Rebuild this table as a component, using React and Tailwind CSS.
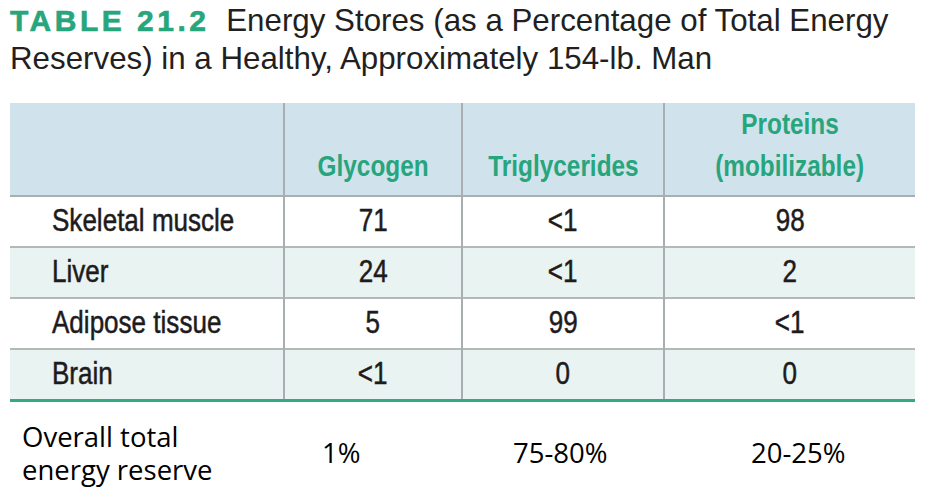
import React from "react";

const rows = [
  { label: "Skeletal muscle", g: "71", t: "<1", p: "98", bg: "bg-white" },
  { label: "Liver", g: "24", t: "<1", p: "2", bg: "bg-[#e9f3f1]" },
  { label: "Adipose tissue", g: "5", t: "99", p: "<1", bg: "bg-white" },
  { label: "Brain", g: "<1", t: "0", p: "0", bg: "bg-[#e9f3f1]" },
];

// no narrow face installed, so squeeze Liberation Sans to the condensed look
const Cond = ({ children, left }) => (
  <span className={`inline-block scale-x-[0.84] ${left ? "origin-left" : "origin-center"}`}>
    {children}
  </span>
);

const App = () => {
  return (
    <main className="w-[936px] h-[496px] bg-white overflow-hidden">
      <h1 className="pl-[10px] pt-[2px] text-[31.3px] leading-[38px] text-[#231f20] font-['Liberation_Sans',Arial,sans-serif]">
        <span className="font-bold text-[30px] tracking-[3.5px] text-[#27a57c] mr-[8px] [-webkit-text-stroke:0.6px_#27a57c]">
          TABLE 21.2
        </span>{" "}
        Energy Stores (as a Percentage of Total Energy
        <br />
        Reserves) in a Healthy, Approximately 154-lb. Man
      </h1>

      <table className="ml-[10px] mt-[25px] w-[905px] border-collapse table-fixed font-['Liberation_Sans',Arial,sans-serif]">
        <colgroup>
          <col className="w-[274px]" />
          <col className="w-[178px]" />
          <col className="w-[202px]" />
          <col className="w-[251px]" />
        </colgroup>
        <thead>
          <tr className="h-[92px] bg-[#d0e2eb] border-b-2 border-[#a9aeb0]">
            <th></th>
            <th className="border-l-2 border-[#a9aeb0] align-bottom pb-[8px] text-[29px] leading-[42px] font-bold text-[#27a57c]">
              <Cond>Glycogen</Cond>
            </th>
            <th className="border-l-2 border-[#a9aeb0] align-bottom pb-[8px] text-[29px] leading-[42px] font-bold text-[#27a57c]">
              <Cond>Triglycerides</Cond>
            </th>
            <th className="border-l-2 border-[#a9aeb0] align-bottom pb-[8px] text-[29px] leading-[42px] font-bold text-[#27a57c]">
              <Cond>Proteins</Cond>
              <br />
              <Cond>(mobilizable)</Cond>
            </th>
          </tr>
        </thead>
        <tbody>
          {rows.map((r, i) => (
            <tr
              key={i}
              className={`h-[51px] ${r.bg} ${
                i === rows.length - 1
                  ? "border-b-[3px] border-b-[#35a986]"
                  : "border-b-2 border-[#b4b8b8]"
              } text-[31px] text-[#1e1b1c] [-webkit-text-stroke:0.5px_#1e1b1c]`}
            >
              <td className="pl-[42px]">
                <Cond left>{r.label}</Cond>
              </td>
              <td className="border-l-2 border-[#a9aeb0] text-center">
                <Cond>{r.g}</Cond>
              </td>
              <td className="border-l-2 border-[#a9aeb0] text-center">
                <Cond>{r.t}</Cond>
              </td>
              <td className="border-l-2 border-[#a9aeb0] text-center">
                <Cond>{r.p}</Cond>
              </td>
            </tr>
          ))}
        </tbody>
      </table>

      <div className="flex items-center pl-[22px] pt-[18px] text-[27.5px] leading-[33px] text-black font-['Open_Sans',sans-serif]">
        <div className="w-[300px]">
          <div>Overall total</div>
          <div>energy reserve</div>
        </div>
        <div className="w-[191px]">1%</div>
        <div className="w-[238px]">75-80%</div>
        <div>20-25%</div>
      </div>
    </main>
  );
};

export default App;
